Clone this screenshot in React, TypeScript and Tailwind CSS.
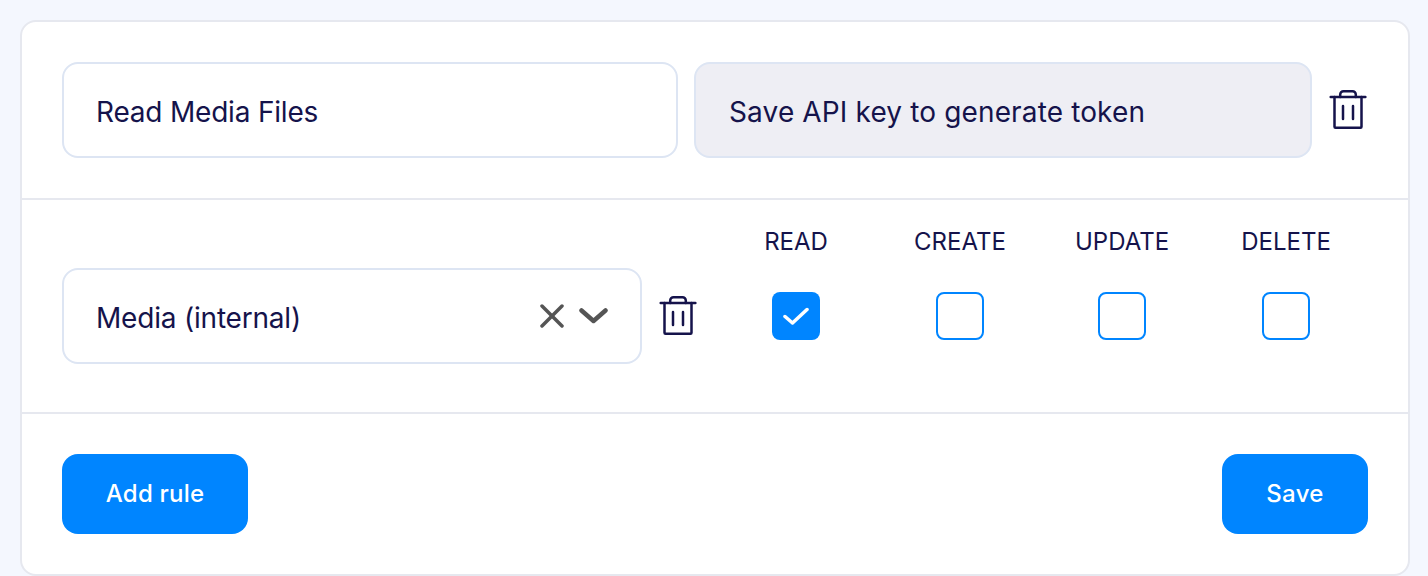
const font = "font-['Inter','Noto_Sans',sans-serif]"

function TrashIcon() {
  return (
    <svg width="38" height="42" viewBox="0 0 38 42" fill="none" stroke="#15134b" strokeWidth="2.5" strokeLinecap="round" strokeLinejoin="round" className="shrink-0">
      <path d="M1.7 8H36.4" />
      <path d="M5.5 8V37.8a1 1 0 0 0 1 1H31.5a1 1 0 0 0 1-1V8" />
      <path d="M11.2 8V5.5a3.3 3.3 0 0 1 3.3-3.3H23.5a3.3 3.3 0 0 1 3.3 3.3V8" />
      <path d="M14 17V30" />
      <path d="M24 17V30" />
    </svg>
  )
}

function Permission({ label, checked }: { label: string; checked?: boolean }) {
  return (
    <div className="flex flex-col items-center">
      <span className="pb-2 text-[24px] font-[380] leading-[36px] text-[#15134b]">{label}</span>
      <div className="flex h-24 items-center">
        {checked ? (
          <span className="flex h-12 w-12 items-center justify-center rounded-lg bg-[#0085ff]">
            <svg width="26" height="20" viewBox="0 0 26 20" fill="none" stroke="#fff" strokeWidth="3.5" strokeLinecap="round" strokeLinejoin="round">
              <path d="M2 10.5L9.5 17L24 3.5" />
            </svg>
          </span>
        ) : (
          <span className="h-12 w-12 rounded-lg border-2 border-[#0085ff] bg-white" />
        )}
      </div>
    </div>
  )
}

export default function App() {
  return (
    <div className={`${font} h-[576px] overflow-hidden bg-[#f4f7fe] pl-5 pr-[18px] pt-5`}>
      <div className="h-[556px] rounded-2xl border-2 border-[#e6e8ef] bg-white">
        <div className="flex items-center gap-4 border-b-2 border-[#e6e8ef] p-10">
          <div className="flex h-24 w-[616px] items-center rounded-2xl border-2 border-[#dde5f3] bg-white px-8 pt-1 text-[28px] font-[380] tracking-[-0.2px] text-[#15134b]">
            Read Media Files
          </div>
          <div className="flex h-24 w-[618px] items-center rounded-2xl border-2 border-[#dde5f3] bg-[#eeeef4] px-[33px] pt-1 text-[28px] font-[380] tracking-[0.14px] text-[#15134b]">
            Save API key to generate token
          </div>
          <div className="ml-px">
            <TrashIcon />
          </div>
        </div>

        <div className="flex h-[214px] items-end border-b-2 border-[#e6e8ef] pb-12 pl-10 pr-[38px]">
          <div className="flex h-24 w-[580px] items-center justify-between rounded-2xl border-2 border-[#dde5f3] bg-white pl-8 pr-8 text-[28px] font-[380] tracking-[-0.2px] text-[#15134b]">
            <span className="pt-1">Media (internal)</span>
            <span className="flex items-center gap-[15px]">
              <svg width="24" height="24" viewBox="0 0 24 24" fill="none" stroke="#555" strokeWidth="3.5" strokeLinecap="round">
                <path d="M2 2L22 22" />
                <path d="M22 2L2 22" />
              </svg>
              <svg width="29" height="18" viewBox="0 0 29 18" fill="none" stroke="#555" strokeWidth="4.5" strokeLinecap="round" strokeLinejoin="round">
                <path d="M2.5 3.5L14.5 14L26.5 3.5" />
              </svg>
            </span>
          </div>
          <div className="ml-[17px] flex h-24 items-center">
            <TrashIcon />
          </div>
          <div className="ml-[17px] grid w-[656px] grid-cols-[164px_164px_160px_168px]">
            <Permission label="READ" checked />
            <Permission label="CREATE" />
            <Permission label="UPDATE" />
            <Permission label="DELETE" />
          </div>
        </div>

        <div className="flex justify-between p-10">
          <button className="h-20 w-[186px] rounded-2xl bg-[#0085ff] text-[24px] font-[450] tracking-[0.2px] text-white">Add rule</button>
          <button className="h-20 w-[146px] rounded-2xl bg-[#0085ff] text-[24px] font-[450] tracking-[0.3px] text-white">Save</button>
        </div>
      </div>
    </div>
  )
}
